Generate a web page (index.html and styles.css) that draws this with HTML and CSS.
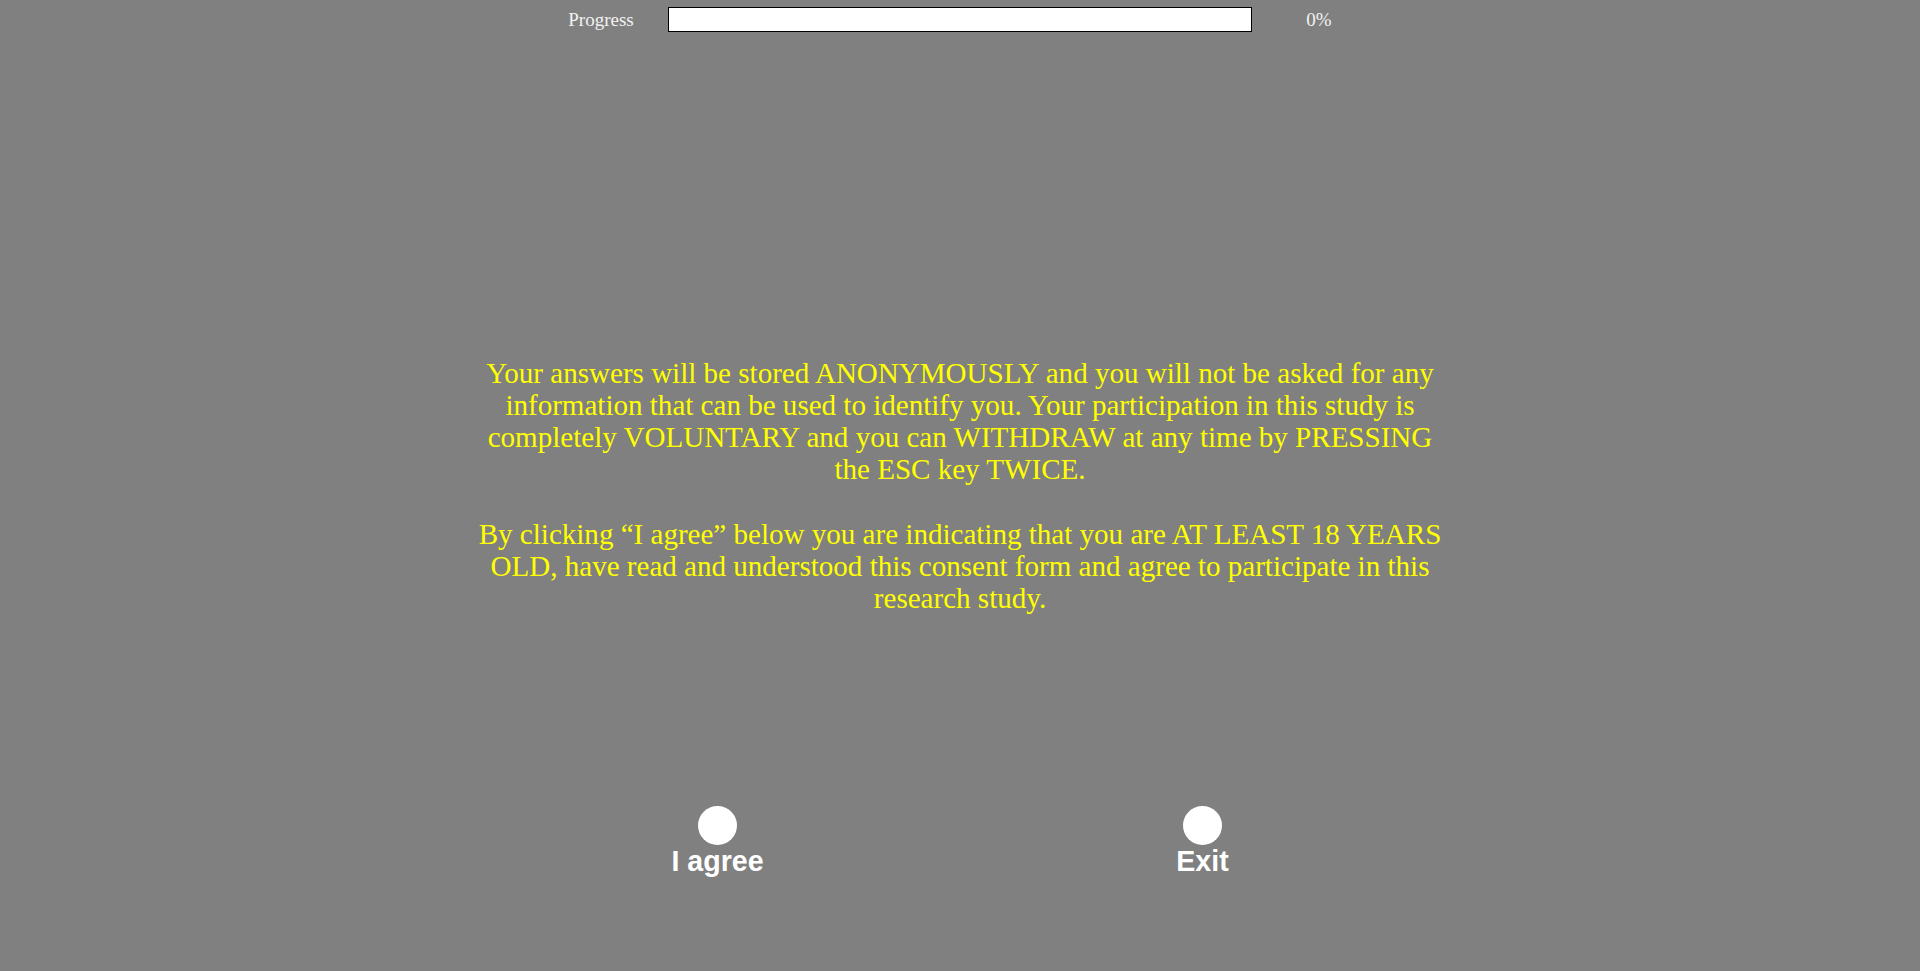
FILE: index.html
```html
<!DOCTYPE html>
<html lang="en">
<head>
<meta charset="utf-8">
<title>Consent</title>
<link rel="stylesheet" href="styles.css">
</head>
<body>
<header class="progress-row">
  <span class="progress-label">Progress</span>
  <div class="progress-track"><div class="progress-fill" style="width:0%"></div></div>
  <span class="progress-value">0%</span>
</header>
<main class="consent">
  <p class="consent-text">Your answers will be stored ANONYMOUSLY and you will not be asked for any information that can be used to identify you. Your participation in this study is completely VOLUNTARY and you can WITHDRAW at any time by PRESSING the ESC key TWICE.</p>
  <p class="consent-text">By clicking “I agree” below you are indicating that you are AT LEAST 18 YEARS OLD, have read and understood this consent form and agree to participate in this research study.</p>
</main>
<div class="choices">
  <button class="choice" type="button"><span class="dot"></span><span class="choice-label">I agree</span></button>
  <button class="choice" type="button"><span class="dot"></span><span class="choice-label">Exit</span></button>
</div>
</body>
</html>
```
FILE: styles.css
```css
html, body {
  margin: 0;
  padding: 0;
}
body {
  background: #808080;
  width: 1920px;
  height: 971px;
  overflow: hidden;
  font-family: "Liberation Serif", "Times New Roman", serif;
}
.progress-row {
  display: grid;
  grid-template-columns: 134px 584px 134px;
  justify-content: center;
  align-items: center;
  padding-top: 7px;
}
.progress-label,
.progress-value {
  text-align: center;
  color: #f2f2f2;
  font-size: 19px;
  line-height: 25px;
}
.progress-track {
  height: 25px;
  box-sizing: border-box;
  border: 1px solid #000;
  background: #fff;
}
.progress-fill {
  height: 100%;
  background: #4a4a4a;
}
.consent {
  width: 980px;
  margin: 325px auto 0;
  text-align: center;
}
.consent-text {
  margin: 0;
  color: #ffff00;
  font-size: 29.05px;
  line-height: 32px;
}
.consent-text + .consent-text {
  margin-top: 33px;
}
.choices {
  display: flex;
  justify-content: center;
  gap: 365px;
  margin-top: 192px;
}
.choice {
  width: 120px;
  display: flex;
  flex-direction: column;
  align-items: center;
  background: none;
  border: 0;
  padding: 0;
  cursor: pointer;
}
.dot {
  width: 39px;
  height: 39px;
  border-radius: 50%;
  background: #fff;
}
.choice-label {
  font-family: "Liberation Sans", Arial, sans-serif;
  font-weight: bold;
  font-size: 28.6px;
  line-height: 32px;
  color: #ffffff;
}
```
